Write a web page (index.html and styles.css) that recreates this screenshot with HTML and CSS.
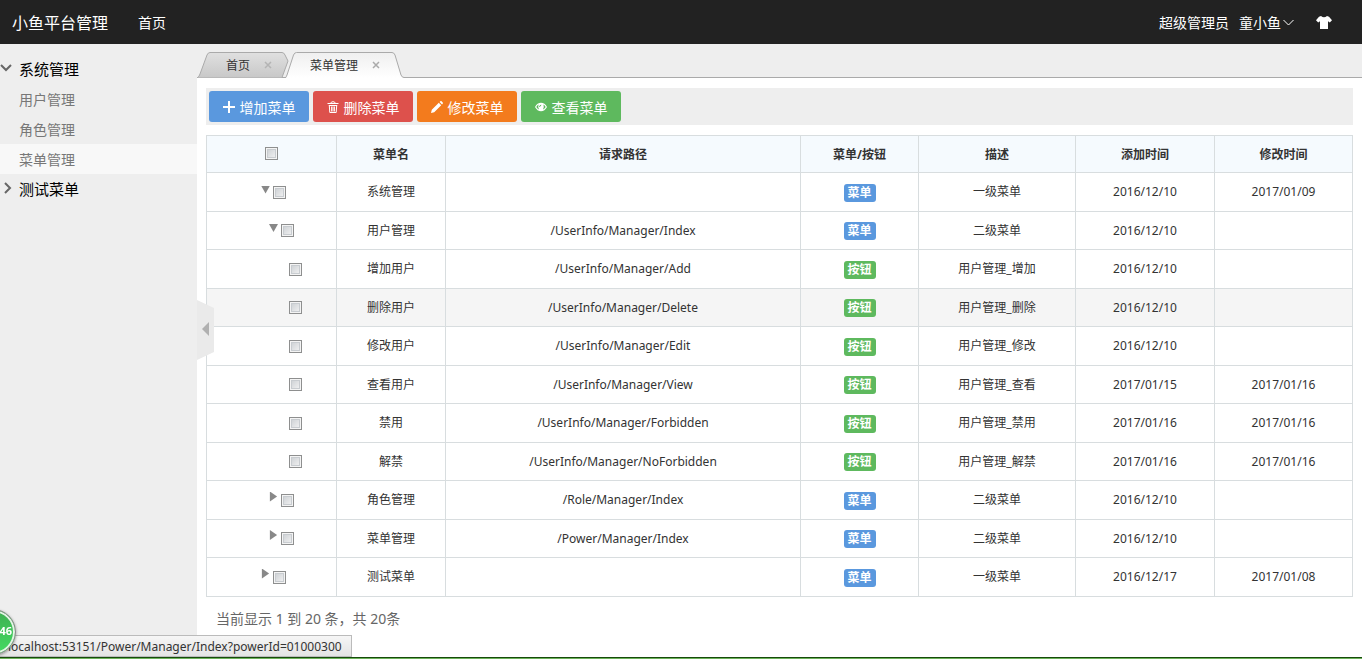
FILE: index.html
```html
<!DOCTYPE html>
<html lang="zh-CN">
<head>
  <meta charset="UTF-8" />
  <meta name="viewport" content="width=device-width, initial-scale=1.0" />
  <title>小鱼平台管理</title>
  <link rel="stylesheet" href="styles.css">
</head>
<body>
  <header class="navbar">
    <a class="logo" href="#">小鱼平台管理</a>
    <nav><a href="#">首页</a></nav>
    <div class="userbar">
      <span>超级管理员</span>
      <a class="user" href="#">童小鱼
        <svg width="11" height="7" viewBox="0 0 11 7"><path d="M.5 1l5 5 5-5" fill="none" stroke="#fff"/></svg>
      </a>
      <a class="skin" href="#" aria-label="换肤">
        <svg width="16" height="13" viewBox="0 0 16 13"><path d="M5 0Q8 2.6 11 0L13 .8 16 4.2 13.8 6.4 12 5.2V13H4V5.2L2.2 6.4 0 4.2 3 .8z" fill="#fff"/></svg>
      </a>
    </div>
  </header>

  <div class="layout">
    <aside class="sidebar">
      <a class="menu-title" href="#">
        <svg width="12" height="12" viewBox="0 0 12 12"><path d="M1 3l5 5 5-5" fill="none" stroke="#666" stroke-width="2"/></svg>
        系统管理
      </a>
      <ul>
        <li><a href="#">用户管理</a></li>
        <li><a href="#">角色管理</a></li>
        <li class="active"><a href="#">菜单管理</a></li>
      </ul>
      <a class="menu-title" href="#">
        <svg width="12" height="12" viewBox="0 0 12 12"><path d="M5 1l5 5-5 5" fill="none" stroke="#666" stroke-width="2"/></svg>
        测试菜单
      </a>
    </aside>

    <main class="main">
      <button class="collapse" aria-label="收起菜单">
        <svg width="17" height="60" viewBox="0 0 17 60"><path d="M0 0l17 8v44L0 60z" fill="#eaeaea"/><path d="M12 22v14l-7-7z" fill="#b0b0b0"/></svg>
      </button>

      <div class="tabs">
        <div class="tab tab-home">
          <svg class="tab-bg" width="94" height="26" viewBox="0 0 94 26">
            <defs><linearGradient id="tabGray" x1="0" y1="0" x2="0" y2="1"><stop offset="0" stop-color="#e0e0e0"/><stop offset="1" stop-color="#c8c8c8"/></linearGradient></defs>
            <path d="M.5 25.5Q2 25 3 22L10 3Q11 .5 13 .5H85Q87 .5 88 3L91 9 85 25.5" fill="url(#tabGray)" stroke="#aaa"/>
          </svg>
          <a href="#">首页</a>
          <button class="close" aria-label="关闭首页"><svg width="8" height="8" viewBox="0 0 8 8"><path d="M1 1l6 6M7 1L1 7" stroke="#b4b4b4" stroke-width="1.5"/></svg></button>
        </div>
        <div class="tab tab-menu">
          <svg class="tab-bg" width="120" height="26" viewBox="0 0 120 26">
            <defs><linearGradient id="tabLight" x1="0" y1="0" x2="0" y2="1"><stop offset="0" stop-color="#efefef"/><stop offset="1" stop-color="#fff"/></linearGradient></defs>
            <path d="M1 26L8.500 3Q9.500.5 11.500.5H107Q109 .5 110 3L116 23Q117 25.500 119 25.500V26z" fill="url(#tabLight)"/>
            <path d="M.5 25.500Q1 25.500 2 23L8.500 3Q9.500.5 11.500.5H107Q109 .5 110 3L116 23Q117 25.500 119 25.500H120" fill="none" stroke="#aaa"/>
          </svg>
          <a href="#">菜单管理</a>
          <button class="close" aria-label="关闭菜单管理"><svg width="8" height="8" viewBox="0 0 8 8"><path d="M1 1l6 6M7 1L1 7" stroke="#aaa" stroke-width="1.5"/></svg></button>
        </div>
      </div>

      <div class="content">
        <div class="toolbar">
          <button class="btn btn-blue">
            <svg width="12" height="12" viewBox="0 0 12 12"><path d="M6 0v12M0 6h12" stroke="#fff" stroke-width="2"/></svg>
            增加菜单
          </button>
          <button class="btn btn-red">
            <svg width="12" height="12" viewBox="0 0 12 12"><path d="M.5 2.500h11M3.500 2.500Q4 .7 6 .7t2.500 1.800M1.800 4.500h8.400M2.300 4.500l.5 7h6.400l.5-7M4.600 5.500v5M6 5.500v5M7.400 5.500v5" fill="none" stroke="#fff"/></svg>
            删除菜单
          </button>
          <button class="btn btn-orange">
            <svg width="12" height="12" viewBox="0 0 12 12"><path d="M0 12l.8-3.200L7.800 1.800l2.400 2.400-7 7zM8.600 1l.7-.7q.7-.5 1.300 0l1.100 1.100q.5.600 0 1.300L11 3.400z" fill="#fff"/></svg>
            修改菜单
          </button>
          <button class="btn btn-green">
            <svg width="12" height="12" viewBox="0 0 12 12"><path d="M0 6Q2.300 1.800 6 1.800T12 6Q9.700 10.200 6 10.200T0 6z" fill="#fff"/><path d="M1.300 6Q2.200 4.300 3.600 3.600 2.600 6.400 4 8.500 2.300 7.700 1.300 6zM10.700 6Q9.800 4.300 8.400 3.600 9.400 6.400 8 8.500 9.700 7.700 10.700 6z" fill="#5eb95e"/><path d="M4.600 6Q4.600 4.200 6.200 4.200" fill="none" stroke="#5eb95e"/></svg>
            查看菜单
          </button>
        </div>

        <table class="grid">
          <colgroup>
            <col class="col-check"><col class="col-name"><col class="col-path"><col class="col-type"><col class="col-desc"><col class="col-added"><col class="col-changed">
          </colgroup>
          <thead>
            <tr>
              <th><div class="tree"><input type="checkbox" aria-label="全选"></div></th>
              <th>菜单名</th>
              <th>请求路径</th>
              <th>菜单/按钮</th>
              <th>描述</th>
              <th>添加时间</th>
              <th>修改时间</th>
            </tr>
          </thead>
          <tbody>
            <tr>
              <td><div class="tree level-1"><i class="arrow open"></i><input type="checkbox" aria-label="系统管理"></div></td>
              <td>系统管理</td><td></td><td><span class="label blue">菜单</span></td><td>一级菜单</td><td>2016/12/10</td><td>2017/01/09</td>
            </tr>
            <tr>
              <td><div class="tree level-2"><i class="arrow open"></i><input type="checkbox" aria-label="用户管理"></div></td>
              <td>用户管理</td><td>/UserInfo/Manager/Index</td><td><span class="label blue">菜单</span></td><td>二级菜单</td><td>2016/12/10</td><td></td>
            </tr>
            <tr>
              <td><div class="tree level-3"><i class="arrow"></i><input type="checkbox" aria-label="增加用户"></div></td>
              <td>增加用户</td><td>/UserInfo/Manager/Add</td><td><span class="label green">按钮</span></td><td>用户管理_增加</td><td>2016/12/10</td><td></td>
            </tr>
            <tr class="hover">
              <td><div class="tree level-3"><i class="arrow"></i><input type="checkbox" aria-label="删除用户"></div></td>
              <td>删除用户</td><td>/UserInfo/Manager/Delete</td><td><span class="label green">按钮</span></td><td>用户管理_删除</td><td>2016/12/10</td><td></td>
            </tr>
            <tr>
              <td><div class="tree level-3"><i class="arrow"></i><input type="checkbox" aria-label="修改用户"></div></td>
              <td>修改用户</td><td>/UserInfo/Manager/Edit</td><td><span class="label green">按钮</span></td><td>用户管理_修改</td><td>2016/12/10</td><td></td>
            </tr>
            <tr>
              <td><div class="tree level-3"><i class="arrow"></i><input type="checkbox" aria-label="查看用户"></div></td>
              <td>查看用户</td><td>/UserInfo/Manager/View</td><td><span class="label green">按钮</span></td><td>用户管理_查看</td><td>2017/01/15</td><td>2017/01/16</td>
            </tr>
            <tr>
              <td><div class="tree level-3"><i class="arrow"></i><input type="checkbox" aria-label="禁用"></div></td>
              <td>禁用</td><td>/UserInfo/Manager/Forbidden</td><td><span class="label green">按钮</span></td><td>用户管理_禁用</td><td>2017/01/16</td><td>2017/01/16</td>
            </tr>
            <tr>
              <td><div class="tree level-3"><i class="arrow"></i><input type="checkbox" aria-label="解禁"></div></td>
              <td>解禁</td><td>/UserInfo/Manager/NoForbidden</td><td><span class="label green">按钮</span></td><td>用户管理_解禁</td><td>2017/01/16</td><td>2017/01/16</td>
            </tr>
            <tr>
              <td><div class="tree level-2"><i class="arrow closed"></i><input type="checkbox" aria-label="角色管理"></div></td>
              <td>角色管理</td><td>/Role/Manager/Index</td><td><span class="label blue">菜单</span></td><td>二级菜单</td><td>2016/12/10</td><td></td>
            </tr>
            <tr>
              <td><div class="tree level-2"><i class="arrow closed"></i><input type="checkbox" aria-label="菜单管理"></div></td>
              <td>菜单管理</td><td>/Power/Manager/Index</td><td><span class="label blue">菜单</span></td><td>二级菜单</td><td>2016/12/10</td><td></td>
            </tr>
            <tr>
              <td><div class="tree level-1"><i class="arrow closed"></i><input type="checkbox" aria-label="测试菜单"></div></td>
              <td>测试菜单</td><td></td><td><span class="label blue">菜单</span></td><td>一级菜单</td><td>2016/12/17</td><td>2017/01/08</td>
            </tr>
          </tbody>
        </table>

        <p class="summary">当前显示 1 到 20 条，共 20条</p>
      </div>
    </main>
  </div>

  <div class="status">localhost:53151/Power/Manager/Index?powerId=01000300</div>
  <div class="ball">46</div>
  <div class="strip"></div>
</body>
</html>
```
FILE: styles.css
```css
* {
  box-sizing: border-box;
}

body {
  margin: 0;
  min-height: 100vh;
  display: flex;
  flex-direction: column;
  overflow: hidden;
  font-family: "Noto Sans", "Noto Sans CJK SC", sans-serif;
  font-size: 14px;
  color: #333;
  background: #fff;
}

a {
  color: inherit;
  text-decoration: none;
}

svg {
  display: block;
}

button {
  font-family: inherit;
  border: none;
  padding: 0;
  background: none;
  cursor: pointer;
}

/* top bar */
.navbar {
  display: flex;
  align-items: center;
  gap: 30px;
  height: 44px;
  padding: 0 30px 0 12px;
  background: #222;
  color: #fff;
}

.logo {
  font-size: 16px;
}

.userbar {
  display: flex;
  align-items: center;
  gap: 10px;
  margin-left: auto;
}

.user {
  display: flex;
  align-items: center;
  gap: 2px;
}

.skin {
  margin-left: 12px;
}

.layout {
  display: flex;
  flex: 1;
}

/* left menu */
.sidebar {
  flex: none;
  width: 197px;
  padding-top: 10px;
  background: #eee;
}

.sidebar ul {
  list-style: none;
  margin: 0;
  padding: 0;
}

.menu-title {
  display: flex;
  align-items: center;
  gap: 7px;
  height: 30px;
  padding-bottom: 2px;
  font-size: 15px;
  color: #000;
}

.sidebar li a {
  display: block;
  height: 30px;
  padding-left: 19px;
  line-height: 32px;
  color: #777;
}

.sidebar .active {
  background: #f8f8f8;
}

.main {
  position: relative;
  flex: 1;
  min-width: 0;
}

.collapse {
  position: fixed;
  top: 50%;
  left: 197px;
  margin-top: -30px;
}

/* tabs */
.tabs {
  display: flex;
  align-items: flex-end;
  height: 34px;
  background: #eee;
  border-bottom: 1px solid #aaa;
}

.tab {
  position: relative;
  display: flex;
  align-items: center;
  justify-content: space-between;
  height: 26px;
  margin-bottom: -1px;
  font-size: 12px;
}

.tab-home {
  width: 88px;
  padding: 0 13px 0 29px;
}

.tab-menu {
  width: 120px;
  padding: 0 25px 0 25px;
}

.tab-bg {
  position: absolute;
  left: 0;
  bottom: 0;
}

.tab a,
.close {
  position: relative;
}

/* toolbar */
.content {
  padding: 10px 9px;
}

.toolbar {
  display: flex;
  gap: 4px;
  padding: 3px;
  background: #eee;
}

.btn {
  display: flex;
  align-items: center;
  justify-content: center;
  gap: 5px;
  width: 100px;
  height: 31px;
  border-radius: 3px;
  font-size: 14px;
  color: #fff;
}

.btn-blue {
  background: #5a98de;
}

.btn-red {
  background: #dd514c;
}

.btn-orange {
  background: #f37b1d;
}

.btn-green {
  background: #5eb95e;
}

/* table */
.grid {
  width: 100%;
  margin-top: 10px;
  table-layout: fixed;
  border-collapse: collapse;
  font-size: 12px;
}

.col-check {
  width: 130px;
}

.col-name {
  width: 109px;
}

.col-type {
  width: 118px;
}

.col-desc {
  width: 157px;
}

.col-added {
  width: 139px;
}

.col-changed {
  width: 138px;
}

.grid th,
.grid td {
  padding: 0;
  border: 1px solid #d8dddf;
  text-align: center;
  line-height: 20px;
}

.grid th {
  height: 37px;
  padding-top: 1px;
  background: #f5fafe;
}

.grid th:first-child {
  padding: 0 0 1px;
}

.grid td {
  height: 38px;
}

.grid tr:nth-child(odd) td {
  height: 39px;
}

.grid .hover {
  background: #f5f5f5;
}

input[type="checkbox"] {
  appearance: none;
  width: 13px;
  height: 13px;
  margin: 0;
  border: 1px solid #8e8f8f;
  background: linear-gradient(135deg, #c8ccd0, #f6f6f6);
  box-shadow: inset 0 0 0 1px #f4f4f4, inset 0 0 0 2px #c8ccd0;
}

.tree {
  display: flex;
  justify-content: center;
  gap: 3px;
}

.level-1 {
  padding-left: 4px;
}

.level-2 {
  padding-left: 20px;
}

.level-3 {
  padding-left: 36px;
}

.arrow {
  width: 9px;
  height: 10px;
}

.arrow.open {
  height: 8px;
  background: #888;
  clip-path: polygon(0 0, 100% 0, 50% 100%);
}

.arrow.closed {
  background: #888;
  clip-path: polygon(10% 0, 90% 50%, 10% 100%);
  margin-top: -2px;
}

.label {
  display: inline-block;
  width: 32px;
  border-radius: 3px;
  line-height: 18px;
  font-weight: bold;
  color: #fff;
  vertical-align: middle;
}

.label.blue {
  background: #5a98de;
}

.label.green {
  background: #5eb95e;
}

.summary {
  margin: 12px 10px 0;
  line-height: 20px;
  color: #666;
}

/* browser overlays */
.status {
  position: fixed;
  left: 0;
  bottom: 2px;
  min-width: 352px;
  height: 22px;
  padding: 0 4px 0 8px;
  border: 1px solid #bbb;
  border-left: none;
  background: linear-gradient(#f6f6f6, #e4e4e4);
  font-size: 12px;
  line-height: 22px;
}

.ball {
  position: fixed;
  left: -30px;
  bottom: 4px;
  width: 46px;
  height: 46px;
  padding-right: 3px;
  border: 1px solid #888;
  border-radius: 50%;
  background: linear-gradient(#3fae52, #43dc62);
  box-shadow: inset 0 0 0 2px #e4f3e6, 0 1px 3px rgba(0, 0, 0, 0.4);
  font-size: 11px;
  font-weight: bold;
  line-height: 42px;
  text-align: right;
  color: #fff;
}

.strip {
  position: fixed;
  left: 0;
  right: 0;
  bottom: 0;
  height: 2px;
  border-top: 1px solid #174a0c;
  background: #6cb35a;
}
```
